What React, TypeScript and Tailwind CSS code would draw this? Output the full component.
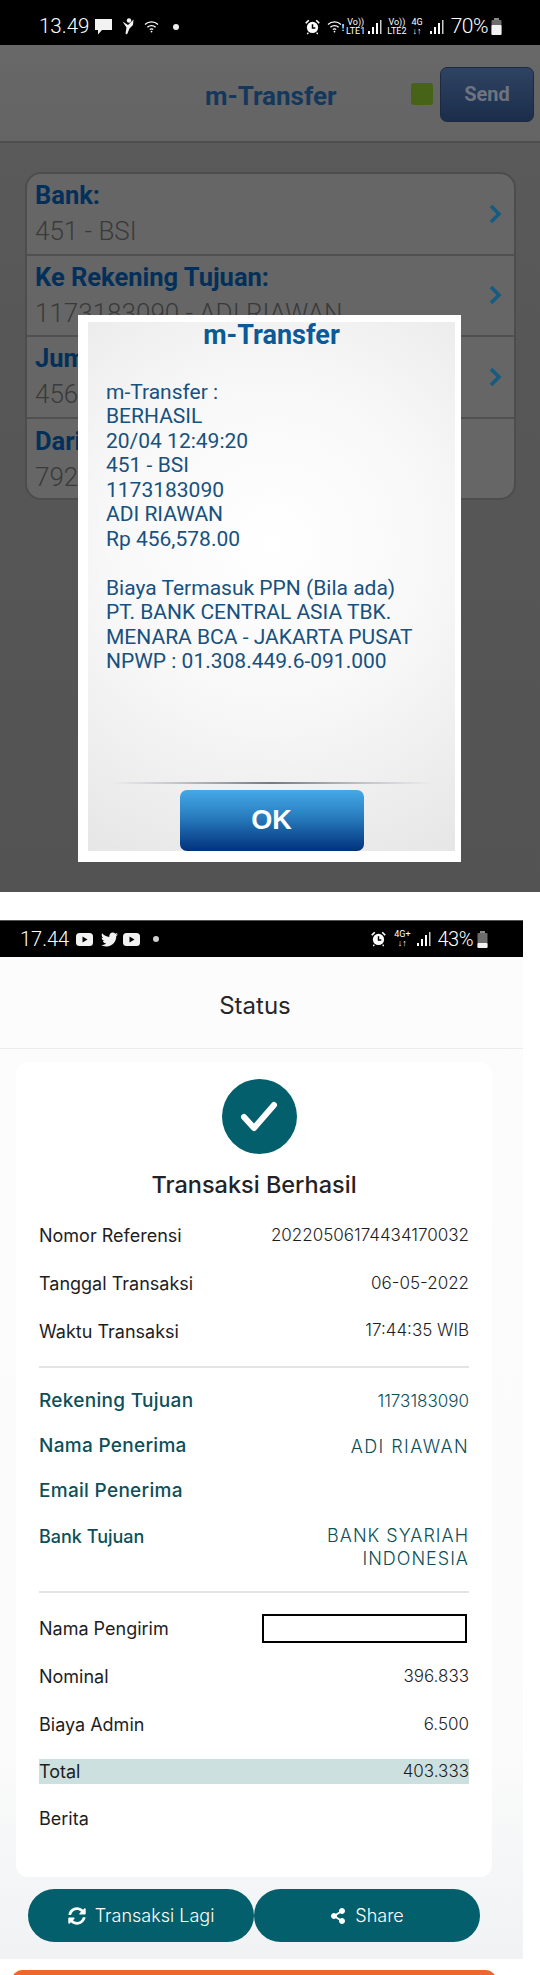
import { FaShareAlt, FaSyncAlt, FaTwitter } from "react-icons/fa";

const bankRows = [
  { label: "Bank:", value: "451 - BSI" },
  { label: "Ke Rekening Tujuan:", value: "1173183090 - ADI RIAWAN" },
  { label: "Jumlah:", value: "456,578.00" },
  { label: "Dari Rekening:", value: "7920000000" },
];

const receipt = [
  "m-Transfer :",
  "BERHASIL",
  "20/04 12:49:20",
  "451 - BSI",
  "1173183090",
  "ADI RIAWAN",
  "Rp 456,578.00",
  "\u00a0",
  "Biaya Termasuk PPN (Bila ada)",
  "PT. BANK CENTRAL ASIA TBK.",
  "MENARA BCA - JAKARTA PUSAT",
  "NPWP : 01.308.449.6-091.000",
];

const infoRows = [
  { label: "Nomor Referensi", value: "20220506174434170032" },
  { label: "Tanggal Transaksi", value: "06-05-2022" },
  { label: "Waktu Transaksi", value: "17:44:35 WIB" },
];

const penerimaRows = [
  { label: "Rekening Tujuan", value: "1173183090" },
  { label: "Nama Penerima", value: "ADI RIAWAN" },
  { label: "Email Penerima", value: "" },
];

function Signal({ color = "#fff" }: { color?: string }) {
  return (
    <svg width="14" height="16" viewBox="0 0 14 16" fill={color}>
      <rect x="0" y="12" width="2" height="3" />
      <rect x="4" y="8" width="2" height="7" />
      <rect x="8" y="4" width="2" height="11" />
      <rect x="12" y="1" width="1.5" height="14" opacity="0.8" />
    </svg>
  );
}

function Alarm({ size = 15 }: { size?: number }) {
  return (
    <svg width={size} height={size + 1} viewBox="0 0 16 17" fill="none">
      <circle cx="8" cy="9" r="6" fill="#fff" />
      <path d="M8 5.5V9.5H11" stroke="#000" strokeWidth="1.6" />
      <path d="M0.8 4.5L4 1.3M15.2 4.5L12 1.3" stroke="#fff" strokeWidth="1.8" />
      <path d="M3.5 14.5L2.5 16M12.5 14.5L13.5 16" stroke="#fff" strokeWidth="1.4" />
    </svg>
  );
}

function Wifi({ mark }: { mark: string }) {
  return (
    <span className="flex items-end">
      <svg width="15" height="13" viewBox="0 0 15 13" fill="none" stroke="#fff" strokeWidth="1.3">
        <path d="M1 4.5C4.6 1 10.4 1 14 4.5" />
        <path d="M3.4 7.2C5.7 5 9.3 5 11.6 7.2" />
        <path d="M5.8 9.6C6.8 8.8 8.2 8.8 9.2 9.6" />
        <circle cx="7.5" cy="11.6" r="0.9" fill="#fff" stroke="none" />
      </svg>
      <span className="text-[9px] leading-[9px] font-bold text-white">{mark}</span>
    </span>
  );
}

function Lte({ top, bottom }: { top: string; bottom: string }) {
  return (
    <span className="flex flex-col items-center text-[9px] leading-[9px] text-white">
      <span>{top}</span>
      <span>{bottom}</span>
    </span>
  );
}

function Battery({ fill }: { fill: number }) {
  return (
    <svg width="11" height="17" viewBox="0 0 11 17">
      <rect x="3" y="0" width="5" height="2" fill="#8a8a8a" />
      <rect x="0.5" y="2" width="10" height="15" rx="1" fill="#6c6c6c" />
      <rect x="0.5" y={17 - fill} width="10" height={fill} rx="1" fill="#f2f2f2" />
    </svg>
  );
}

function Youtube() {
  return (
    <svg width="17" height="13" viewBox="0 0 17 13">
      <rect width="17" height="13" rx="3.5" fill="#f2f2f2" />
      <path d="M6.5 3.5L11.5 6.5L6.5 9.5Z" fill="#000" />
    </svg>
  );
}

function TopStatusBar() {
  return (
    <div className="flex h-[45px] items-center bg-black pl-[39px] pr-[38px] pt-[8px] text-white">
      <span className="w-[56px] text-[20.5px] leading-none font-light">13.49</span>
      <svg width="17" height="16" viewBox="0 0 17 16" fill="#f2f2f2">
        <path d="M0 0H17V11H7L3 15.5V11H0Z" />
      </svg>
      <svg className="ml-[10px]" width="12" height="17" viewBox="0 0 12 17" fill="#f2f2f2">
        <circle cx="7" cy="2.5" r="2.2" />
        <path d="M0.5 3.5L6 7L11.5 1.5L11 7L7.5 10.5L5 16.5L3.5 15.5L4.5 9.5Z" />
      </svg>
      <span className="ml-[10px]">
        <Wifi mark="" />
      </span>
      <span className="ml-[14px] size-[6px] rounded-full bg-[#eeeeee]" />
      <div className="ml-auto flex items-center">
        <Alarm />
        <span className="ml-[7px]">
          <Wifi mark="!" />
        </span>
        <span className="ml-[2px]">
          <Lte top="Vo))" bottom="LTE1" />
        </span>
        <span className="ml-[3px]">
          <Signal />
        </span>
        <span className="ml-[5px]">
          <Lte top="Vo))" bottom="LTE2" />
        </span>
        <span className="ml-[5px]">
          <Lte top="4G" bottom="↓↑" />
        </span>
        <span className="ml-[7px]">
          <Signal />
        </span>
        <span className="ml-[7px] text-[21px] leading-none font-light tracking-[-0.5px]">70%</span>
        <span className="ml-[3px]">
          <Battery fill={10} />
        </span>
      </div>
    </div>
  );
}

function BottomStatusBar() {
  return (
    <div className="flex h-[37px] items-center border-t border-[#555555] bg-black pl-[20px] pr-[35px] font-['Roboto',sans-serif] text-white">
      <span className="w-[56px] text-[20px] leading-none font-light">17.44</span>
      <Youtube />
      <FaTwitter className="ml-[8px] text-[#f2f2f2]" size={17} />
      <span className="ml-[5px]">
        <Youtube />
      </span>
      <span className="ml-[13px] size-[6px] rounded-full bg-[#cfcfcf]" />
      <div className="ml-auto flex items-center">
        <Alarm />
        <span className="ml-[8px]">
          <Lte top="4G+" bottom="↓↑" />
        </span>
        <span className="ml-[6px]">
          <Signal />
        </span>
        <span className="ml-[7px] text-[20px] leading-none font-light tracking-[-0.5px]">43%</span>
        <span className="ml-[4px]">
          <Battery fill={5} />
        </span>
      </div>
    </div>
  );
}

function MTransferScreen() {
  return (
    <section className="relative h-[892px] bg-[linear-gradient(180deg,#5c5c5c_0%,#575757_40%,#535353_100%)] font-['Roboto',sans-serif]">
      <TopStatusBar />
      <div className="flex h-[98px] items-center border-b-2 border-[#4e4e4e] bg-[linear-gradient(180deg,#686868,#646464)] pr-[6px]">
        <h1 className="ml-[205px] pt-[6px] text-[26px] font-bold text-[#14375c]">m-Transfer</h1>
        <span className="ml-auto mt-[2px] size-[22px] rounded-[3px] bg-[#476318]" />
        <button className="ml-[7px] mt-[2px] h-[55px] w-[94px] rounded-[7px] border border-[#1c2a40] bg-[linear-gradient(180deg,#2f4362,#1b2d4b)] text-[20px] font-bold text-[#6d7480]">
          Send
        </button>
      </div>

      <ul className="mx-[25px] mt-[29px] h-[328px] w-[491px] rounded-[16px] border-2 border-[#4d4d4d] bg-[#666666]">
        {bankRows.map((row) => (
          <li
            key={row.label}
            className="flex h-[81.5px] items-center border-b-2 border-[#505050] pl-[8px] pr-[12px] last:border-b-0"
          >
            <div className="flex-1">
              <p className="text-[25.5px] leading-[35px] font-bold text-[#03305a]">{row.label}</p>
              <p className="text-[26px] leading-[36px] font-light text-[#3a3a3a]">{row.value}</p>
            </div>
            {row.label !== "Dari Rekening:" && (
              <svg width="13" height="20" viewBox="0 0 13 20" fill="none" stroke="#165c80" strokeWidth="3.6">
                <path d="M2 2L10 10L2 18" />
              </svg>
            )}
          </li>
        ))}
      </ul>

      {/* dialog over the list */}
      <div className="absolute left-[78px] top-[315px] h-[547px] w-[383px] bg-white pb-[11px] pl-[10px] pr-[6px] pt-[7px]">
        <div className="flex h-full flex-col bg-[radial-gradient(circle_at_50%_42%,#ffffff_0%,#f8f8f8_45%,#e6e6e6_100%)]">
          <h2 className="text-center text-[27px] leading-[26px] font-bold text-[#0a5a98]">m-Transfer</h2>
          <div className="mt-[32px] pl-[18px] text-[21px] leading-[24.45px] text-[#17517f]">
            {receipt.map((line, i) => (
              <p key={i}>{line}</p>
            ))}
          </div>
          <div className="mx-[23px] mt-auto h-[2px] bg-[linear-gradient(90deg,transparent_0%,#c4c6cc_20%,#777a80_50%,#c4c6cc_80%,transparent_100%)]" />
          <button className="mx-auto mt-[6px] h-[61px] w-[184px] rounded-[7px] bg-[linear-gradient(180deg,#45a9e8_0%,#2a7fc0_42%,#00317c_100%)] font-['Liberation_Sans',sans-serif] text-[27px] font-bold text-white">
            OK
          </button>
        </div>
      </div>
    </section>
  );
}

function Row({ label, value, teal }: { label: string; value: string; teal?: boolean }) {
  return (
    <div className={`flex items-center justify-between ${teal ? "h-[45px] text-[#0d4f58]" : "h-[47.7px] text-[#1d1d1f]"}`}>
      <span className={teal ? "text-[19px] font-medium tracking-[0.3px]" : "text-[18px]"}>{label}</span>
      <span className={`font-light ${value === "ADI RIAWAN" ? "text-[18px] tracking-[1.4px]" : "text-[17px]"}`}>{value}</span>
    </div>
  );
}

function StatusScreen() {
  return (
    <section className="mt-[28px] h-[1039px] w-[523px] bg-[linear-gradient(180deg,#fcfcfc_0%,#fbfbfb_80%,#f0f2f4_100%)] font-['Inter',sans-serif]">
      <BottomStatusBar />
      <div className="flex h-[92px] items-center justify-center border-b border-[#ececec] pr-[13px] pt-[7px] text-[24px] text-[#26262a]">
        Status
      </div>
      <div className="ml-[16px] mt-[13px] h-[815px] w-[476px] rounded-[12px] bg-white px-[23px] pt-[17px]">
        <div className="flex justify-center pl-[10px]">
          <span className="flex size-[75px] items-center justify-center rounded-full bg-[#035f6b]">
            <svg width="38" height="32" viewBox="0 0 38 32" fill="none" stroke="#fff" strokeWidth="6" strokeLinecap="round" strokeLinejoin="round">
              <path d="M4 16L14 27L34 4" />
            </svg>
          </span>
        </div>
        <h2 className="mt-[16px] text-center text-[23.5px] leading-[30px] font-medium text-[#232326]">Transaksi Berhasil</h2>

        <div className="mt-[12px]">
          {infoRows.map((row) => (
            <Row key={row.label} {...row} />
          ))}
        </div>
        <hr className="mt-[11px] h-[2px] border-0 bg-[#e4e4e4]" />

        <div className="mt-[11px]">
          {penerimaRows.map((row) => (
            <Row key={row.label} {...row} teal />
          ))}
          <div className="flex h-[45px] items-center justify-between text-[#0d4f58]">
            <span className="text-[18px] font-medium">Bank Tujuan</span>
            <span className="mt-[22px] w-[180px] text-right text-[18px] leading-[22.5px] font-light tracking-[1px]">BANK SYARIAH INDONESIA</span>
          </div>
        </div>
        <hr className="mt-[32px] h-[2px] border-0 bg-[#e4e4e4]" />

        <div className="mt-[12px]">
          <div className="flex h-[47.7px] items-center justify-between text-[#1d1d1f]">
            <span className="text-[18px]">Nama Pengirim</span>
            <span className="mr-[2px] h-[29px] w-[205px] border-2 border-black bg-white" />
          </div>
          <Row label="Nominal" value="396.833" />
          <Row label="Biaya Admin" value="6.500" />
          <div className="my-[11px] flex h-[25px] items-center justify-between bg-[#cde0e0] text-[#1d1d1f]">
            <span className="text-[18px]">Total</span>
            <span className="text-[17px] font-light">403.333</span>
          </div>
          <Row label="Berita" value="" />
        </div>
      </div>

      <div className="ml-[28px] mt-[12px] flex text-[18px] font-light text-white">
        <button className="flex h-[53px] w-[226px] items-center justify-center gap-[9px] rounded-full bg-[#035f6b]">
          <FaSyncAlt size={18} />
          Transaksi Lagi
        </button>
        <button className="flex h-[53px] w-[226px] items-center justify-center gap-[9px] rounded-full bg-[#035f6b]">
          <FaShareAlt size={16} />
          Share
        </button>
      </div>
    </section>
  );
}

export default function App() {
  return (
    <div className="h-[1975px] w-[540px] overflow-hidden bg-white">
      <MTransferScreen />
      <StatusScreen />
      <div className="ml-[12px] mt-[11px] h-[10px] w-[484px] rounded-t-[20px] bg-[#ee682e]" />
    </div>
  );
}
